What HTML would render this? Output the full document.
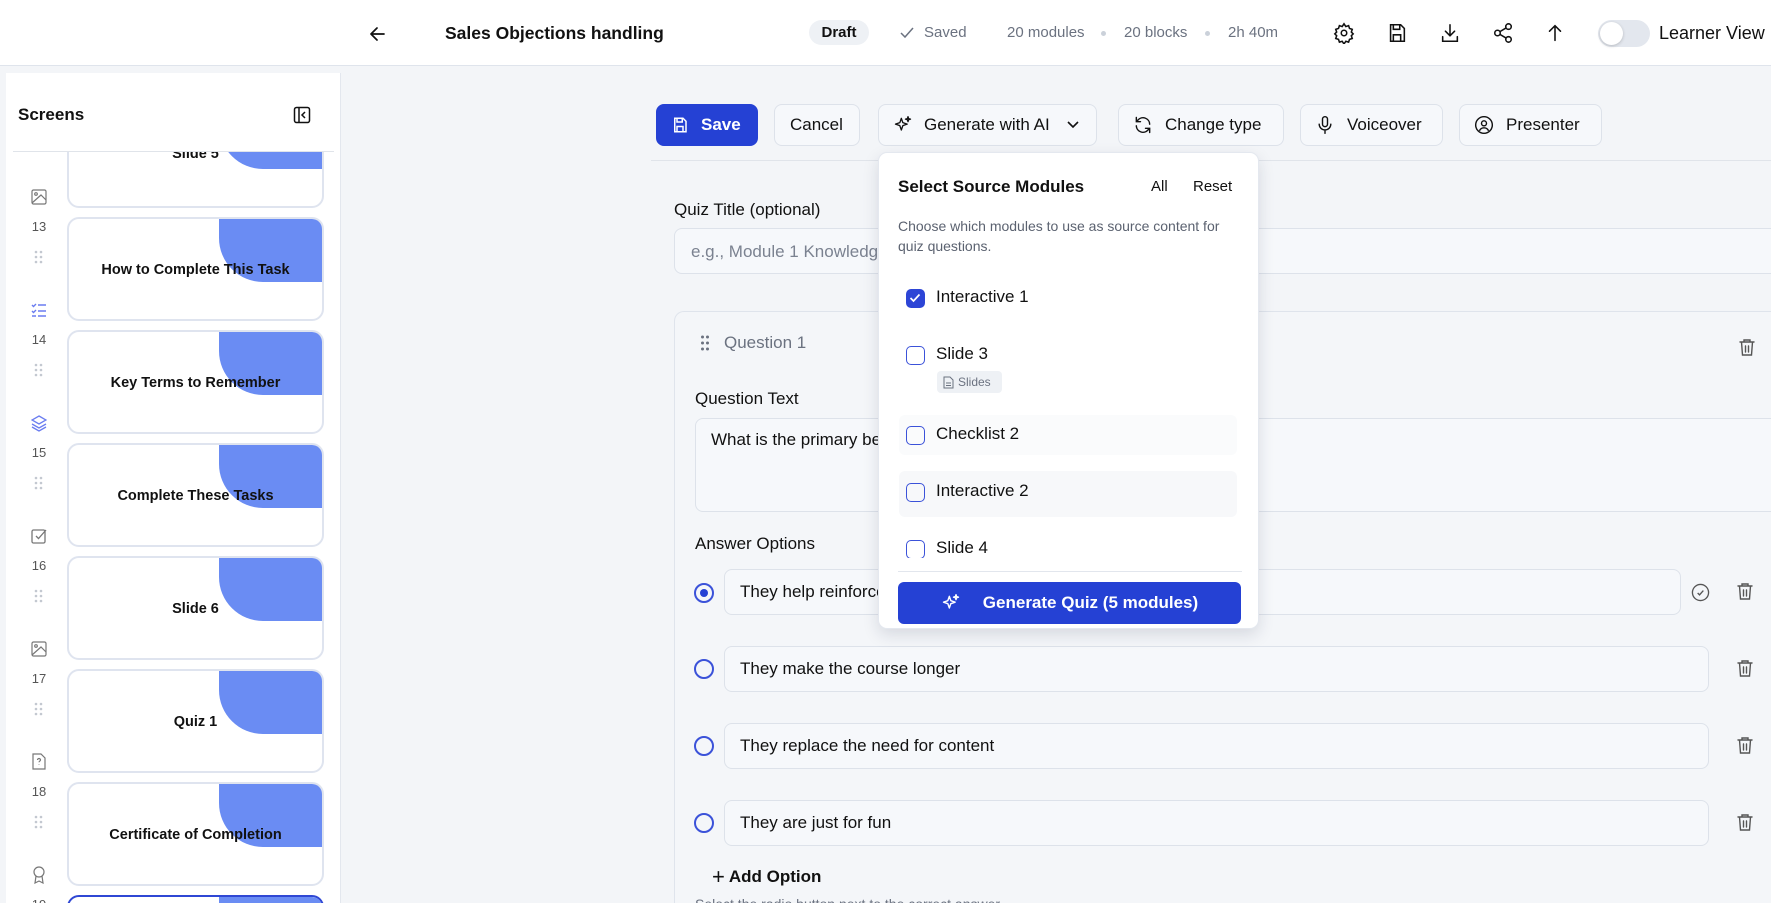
<!DOCTYPE html>
<html><head><meta charset="utf-8"><style>
*{box-sizing:border-box;margin:0;padding:0}
html,body{width:1771px;height:903px;overflow:hidden}
body{background:#f3f5f8;font-family:"Liberation Sans",Arial,sans-serif;color:#111;position:relative}
.a{position:absolute}
svg{display:block}
.hdr{left:0;top:0;width:1771px;height:66px;background:#fff;border-bottom:1px solid #dfe4ec}
.meta{font-size:15px;color:#6b7280;top:24px}
.dot{width:5px;height:5px;border-radius:50%;background:#cbd1da;top:31px}
.side{left:6px;top:73px;width:335px;height:830px;background:#fff;border-right:1px solid #e3e7ee}
.card{left:67px;width:257px;height:104px;background:#fff;border:2px solid #dfe4ef;border-radius:12px;overflow:hidden}
.card .blue{position:absolute;right:0;top:0;width:103px;height:63px;background:#6a8cf3;border-bottom-left-radius:44px}
.card .t{position:absolute;left:0;right:0;top:43px;text-align:center;font-weight:700;font-size:14.5px;color:#111}
.num{left:27px;width:24px;text-align:center;font-size:13px;color:#555}
.btn{top:104px;height:42px;border:1px solid #dde2ea;border-radius:8px;background:#f6f8fb;font-size:17px;color:#111;display:flex;align-items:center;gap:12px;padding-left:14px}
.lbl{font-size:17px;color:#111;font-weight:500}
.inp{background:#f6f8fb;border:1px solid #dde2ea;border-radius:8px}
.opt{left:724px;height:46px;font-size:17px;display:flex;align-items:center;padding-left:15px}
.radio{left:694px;width:20px;height:20px;border:2px solid #3b52d9;border-radius:50%}
.pop{left:878px;top:152px;width:381px;height:477px;background:#fff;border:1px solid #e4e8ef;border-radius:9px;box-shadow:0 6px 16px rgba(20,30,60,.13);overflow:hidden}
.cb{width:19px;height:19px;border:1.6px solid #3b52d9;border-radius:5px}
.it{font-size:17px;color:#111}
</style></head><body>
<div class="a hdr"></div>
<svg class="a" style="left:368px;top:24px" width="20" height="20" viewBox="0 0 20 20"><path d="M16 10H4M9 4L3 10l6 6" fill="none" stroke="#111" stroke-width="1.7" stroke-linecap="round" stroke-linejoin="round"/></svg>
<div class="a" style="left:445px;top:23px;font-size:17.5px;font-weight:700">Sales Objections handling</div>
<div class="a" style="left:809px;top:20px;width:60px;height:25px;border-radius:13px;background:#eef1f5;font-size:15px;font-weight:700;text-align:center;line-height:25px">Draft</div>
<svg class="a" style="left:900px;top:27px" width="14" height="12" viewBox="0 0 14 12"><path d="M1 6l4 4 8-9" fill="none" stroke="#6b7280" stroke-width="1.5"/></svg>
<div class="a meta" style="left:924px">Saved</div>
<div class="a meta" style="left:1007px">20 modules</div>
<div class="a dot" style="left:1101px"></div>
<div class="a meta" style="left:1124px">20 blocks</div>
<div class="a dot" style="left:1205px"></div>
<div class="a meta" style="left:1228px">2h 40m</div>
<svg class="a" style="left:1333px;top:22px" width="22" height="22" viewBox="0 0 24 24" fill="none" stroke="#111" stroke-width="1.7"><circle cx="12" cy="12" r="3"/><path d="M12 2l2 3 3-1 1 3 3 1-1 3 2 2-2 2 1 3-3 1-1 3-3-1-2 3-2-3-3 1-1-3-3-1 1-3-2-2 2-2-1-3 3-1 1-3 3 1z"/></svg>
<svg class="a" style="left:1386px;top:22px" width="22" height="22" viewBox="0 0 24 24" fill="none" stroke="#111" stroke-width="1.7"><path d="M5 3h11l4 4v14H5z"/><path d="M8 3v5h7V3M8 21v-7h8v7"/></svg>
<svg class="a" style="left:1439px;top:22px" width="22" height="22" viewBox="0 0 24 24" fill="none" stroke="#111" stroke-width="1.7" stroke-linecap="round"><path d="M12 3v12M7 10l5 5 5-5M4 16v5h16v-5"/></svg>
<svg class="a" style="left:1492px;top:22px" width="22" height="22" viewBox="0 0 24 24" fill="none" stroke="#111" stroke-width="1.7"><circle cx="18" cy="5" r="3"/><circle cx="6" cy="12" r="3"/><circle cx="18" cy="19" r="3"/><path d="M8.6 10.5l6.8-4M8.6 13.5l6.8 4"/></svg>
<svg class="a" style="left:1544px;top:22px" width="22" height="22" viewBox="0 0 24 24" fill="none" stroke="#111" stroke-width="1.7" stroke-linecap="round"><path d="M12 20V4M6 10l6-6 6 6"/></svg>
<div class="a" style="left:1598px;top:20px;width:52px;height:27px;border-radius:14px;background:#e3e7ee"></div>
<div class="a" style="left:1600px;top:22px;width:23px;height:23px;border-radius:50%;background:#fff;box-shadow:0 1px 3px rgba(0,0,0,.2)"></div>
<div class="a" style="left:1659px;top:23px;font-size:18px;font-weight:500">Learner View</div>

<div class="a side"></div>
<div class="a" style="left:18px;top:105px;font-size:17px;font-weight:600">Screens</div>
<svg class="a" style="left:293px;top:106px" width="18" height="18" viewBox="0 0 18 18" fill="none" stroke="#111" stroke-width="1.5"><rect x="1.5" y="1.5" width="15" height="15" rx="2"/><path d="M6 2v14M12 6l-3 3 3 3"/></svg>
<div class="a" style="left:13px;top:151px;width:321px;height:1px;background:#e0e4ea"></div>
<div class="a" style="left:6px;top:152px;width:334px;height:751px;overflow:hidden">
 <div class="a card" style="left:61px;top:-48px"><div class="blue"></div><div class="t" style="top:40px">Slide 5</div></div>
 <div class="a card" style="left:61px;top:65px"><div class="blue"></div><div class="t">How to Complete This Task</div></div>
 <div class="a card" style="left:61px;top:178px"><div class="blue"></div><div class="t">Key Terms to Remember</div></div>
 <div class="a card" style="left:61px;top:291px"><div class="blue"></div><div class="t">Complete These Tasks</div></div>
 <div class="a card" style="left:61px;top:404px"><div class="blue"></div><div class="t">Slide 6</div></div>
 <div class="a card" style="left:61px;top:517px"><div class="blue"></div><div class="t">Quiz 1</div></div>
 <div class="a card" style="left:61px;top:630px"><div class="blue"></div><div class="t">Certificate of Completion</div></div>
 <div class="a card" style="left:61px;top:743px;border-color:#2f47d4"><div class="blue"></div><div class="t">Slide 7</div></div>
 <div class="a num" style="left:21px;top:67px">13</div>
 <div class="a num" style="left:21px;top:180px">14</div>
 <div class="a num" style="left:21px;top:293px">15</div>
 <div class="a num" style="left:21px;top:406px">16</div>
 <div class="a num" style="left:21px;top:519px">17</div>
 <div class="a num" style="left:21px;top:632px">18</div>
 <div class="a num" style="left:21px;top:745px">19</div>
 <svg class="a" style="left:27px;top:-15px" width="12" height="840" viewBox="0 0 12 840" fill="#c3c8d0">
  <g id="d"><circle cx="3" cy="2" r="1.3"/><circle cx="8" cy="2" r="1.3"/><circle cx="3" cy="7" r="1.3"/><circle cx="8" cy="7" r="1.3"/><circle cx="3" cy="12" r="1.3"/><circle cx="8" cy="12" r="1.3"/></g>
  <use href="#d" y="113"/><use href="#d" y="226"/><use href="#d" y="339"/><use href="#d" y="452"/><use href="#d" y="565"/><use href="#d" y="678"/>
 </svg>
 <svg class="a" style="left:25px;top:37px" width="16" height="16" viewBox="0 0 16 16" fill="none" stroke="#777" stroke-width="1.2"><rect x="1" y="1" width="14" height="14" rx="1.5"/><circle cx="5" cy="5" r="1.3"/><path d="M1 14l9-8 5 5"/></svg>
 <svg class="a" style="left:25px;top:150px" width="16" height="16" viewBox="0 0 16 16" fill="none" stroke="#6a7cf0" stroke-width="1.4"><path d="M1 3l1.5 1.5L5 2M1 9l1.5 1.5L5 8M7 3h8M7 9h8M7 14h8M1 14h4"/></svg>
 <svg class="a" style="left:25px;top:263px" width="16" height="17" viewBox="0 0 16 17" fill="none" stroke="#6a7cf0" stroke-width="1.3"><path d="M8 1l7 4-7 4-7-4zM1 9l7 4 7-4M1 12l7 4 7-4"/></svg>
 <svg class="a" style="left:25px;top:376px" width="16" height="16" viewBox="0 0 16 16" fill="none" stroke="#777" stroke-width="1.3"><rect x="1" y="2" width="13" height="13" rx="1.5"/><path d="M5 8l2.5 2.5L15 2"/></svg>
 <svg class="a" style="left:25px;top:489px" width="16" height="16" viewBox="0 0 16 16" fill="none" stroke="#777" stroke-width="1.2"><rect x="1" y="1" width="14" height="14" rx="1.5"/><circle cx="5" cy="5" r="1.3"/><path d="M1 14l9-8 5 5"/></svg>
 <svg class="a" style="left:26px;top:601px" width="14" height="17" viewBox="0 0 14 17" fill="none" stroke="#777" stroke-width="1.2"><path d="M1 1h8l4 4v11H1z"/><path d="M5.5 7a1.5 1.5 0 113 0c0 1-1.5 1.2-1.5 2.3M7 11.5v.5"/></svg>
 <svg class="a" style="left:26px;top:714px" width="14" height="18" viewBox="0 0 14 18" fill="none" stroke="#777" stroke-width="1.2"><circle cx="7" cy="6" r="5"/><path d="M4 10l-1 7 4-2 4 2-1-7"/></svg>
</div>

<div class="a" style="left:651px;top:160px;width:1120px;height:1px;background:#e0e4ea"></div>
<div class="a btn" style="left:656px;width:102px;background:#2541d4;border-color:#2541d4;color:#fff;font-weight:600">
 <svg width="18" height="18" viewBox="0 0 24 24" fill="none" stroke="#fff" stroke-width="2"><path d="M5 3h11l4 4v14H5z"/><path d="M8 3v5h7V3M8 21v-7h8v7"/></svg>Save</div>
<div class="a btn" style="left:774px;width:86px;padding-left:15px">Cancel</div>
<div class="a btn" style="left:878px;width:219px;gap:11px">
 <svg width="20" height="20" viewBox="0 0 24 24" fill="none" stroke="#111" stroke-width="1.6" stroke-linejoin="round"><path d="M10 4l1.8 5.2L17 11l-5.2 1.8L10 18l-1.8-5.2L3 11l5.2-1.8zM18 2l.7 2.3L21 5l-2.3.7L18 8l-.7-2.3L15 5l2.3-.7z"/></svg>Generate with AI<svg style="margin-left:6px" width="12" height="8" viewBox="0 0 12 8"><path d="M1 1l5 5 5-5" fill="none" stroke="#111" stroke-width="1.6"/></svg></div>
<div class="a btn" style="left:1118px;width:166px">
 <svg width="20" height="20" viewBox="0 0 24 24" fill="none" stroke="#111" stroke-width="1.7" stroke-linecap="round"><path d="M20 11a8 8 0 00-14-5L4 8M4 3v5h5M4 13a8 8 0 0014 5l2-2M20 21v-5h-5"/></svg>Change type</div>
<div class="a btn" style="left:1300px;width:143px">
 <svg width="20" height="20" viewBox="0 0 24 24" fill="none" stroke="#111" stroke-width="1.7" stroke-linecap="round"><rect x="9" y="2" width="6" height="12" rx="3"/><path d="M5 11a7 7 0 0014 0M12 18v4"/></svg>Voiceover</div>
<div class="a btn" style="left:1459px;width:143px">
 <svg width="20" height="20" viewBox="0 0 24 24" fill="none" stroke="#111" stroke-width="1.7"><circle cx="12" cy="12" r="10"/><circle cx="12" cy="10" r="3"/><path d="M6.5 19a6 6 0 0111 0"/></svg>Presenter</div>

<div class="a lbl" style="left:674px;top:200px">Quiz Title (optional)</div>
<div class="a inp" style="left:674px;top:228px;width:1110px;height:46px"></div>
<div class="a" style="left:691px;top:242px;font-size:17px;color:#7b8290">e.g., Module 1 Knowledge Check</div>

<div class="a" style="left:674px;top:311px;width:1110px;height:592px;background:#f4f6f9;border:1px solid #dfe4ec;border-bottom:none;border-radius:10px 10px 0 0"></div>
<svg class="a" style="left:700px;top:335px" width="10" height="16" viewBox="0 0 10 16" fill="#6b7280"><circle cx="2.5" cy="2" r="1.5"/><circle cx="7.5" cy="2" r="1.5"/><circle cx="2.5" cy="8" r="1.5"/><circle cx="7.5" cy="8" r="1.5"/><circle cx="2.5" cy="14" r="1.5"/><circle cx="7.5" cy="14" r="1.5"/></svg>
<div class="a" style="left:724px;top:333px;font-size:17px;color:#6b7280">Question 1</div>
<div class="a lbl" style="left:695px;top:389px">Question Text</div>
<div class="a inp" style="left:695px;top:418px;width:1090px;height:94px"></div>
<div class="a" style="left:711px;top:430px;font-size:17px">What is the primary benefit of using quizzes in sales training?</div>
<div class="a lbl" style="left:695px;top:534px">Answer Options</div>
<div class="a radio" style="top:583px"></div><div class="a" style="left:700px;top:589px;width:8px;height:8px;border-radius:50%;background:#2541d4"></div>
<div class="a inp opt" style="top:569px;width:957px">They help reinforce learning and check understanding</div>
<div class="a radio" style="top:659px"></div>
<div class="a inp opt" style="top:646px;width:985px">They make the course longer</div>
<div class="a radio" style="top:736px"></div>
<div class="a inp opt" style="top:723px;width:985px">They replace the need for content</div>
<div class="a radio" style="top:813px"></div>
<div class="a inp opt" style="top:800px;width:985px">They are just for fun</div>
<div class="a" style="left:712px;top:864px;font-size:17px;font-weight:600"><span style="font-weight:300;font-size:22px;vertical-align:-2px;margin-right:4px">+</span>Add Option</div>
<div class="a" style="left:695px;top:896px;font-size:14px;color:#6b7280;height:7px;overflow:hidden;line-height:16px">Select the radio button next to the correct answer</div>
<svg class="a" style="left:1691px;top:583px" width="19" height="19" viewBox="0 0 20 20" fill="none" stroke="#555" stroke-width="1.4"><circle cx="10" cy="10" r="8.5"/><path d="M7 10.5l2 2 4-4.5"/></svg>
<svg class="a" style="left:0;top:0;overflow:visible" width="1" height="1"><defs><g id="tr" fill="none" stroke="#555" stroke-width="1.4" stroke-linecap="round"><path d="M2 4h14M6 4V2h6v2M3.5 4l1 13h9l1-13M7.5 8v6M10.5 8v6"/></g></defs>
 <use href="#tr" x="1738" y="338"/><use href="#tr" x="1736" y="582"/><use href="#tr" x="1736" y="659"/><use href="#tr" x="1736" y="736"/><use href="#tr" x="1736" y="813"/></svg>

<div class="a pop">
 <div class="a" style="left:19px;top:24px;font-size:17px;font-weight:600">Select Source Modules</div>
 <div class="a" style="left:272px;top:25px;font-size:15px;font-weight:500">All</div>
 <div class="a" style="left:314px;top:25px;font-size:15px;font-weight:500">Reset</div>
 <div class="a" style="left:19px;top:63px;width:325px;font-size:14px;line-height:20px;color:#5b6270">Choose which modules to use as source content for quiz questions.</div>
 <div class="a cb" style="left:27px;top:136px;background:#2d45d6;border-color:#2d45d6"><svg width="16" height="16" viewBox="0 0 16 16"><path d="M3.5 8l3 3 6-6.5" fill="none" stroke="#fff" stroke-width="1.7"/></svg></div>
 <div class="a it" style="left:57px;top:134px">Interactive 1</div>
 <div class="a cb" style="left:27px;top:193px"></div>
 <div class="a it" style="left:57px;top:191px">Slide 3</div>
 <div class="a" style="left:58px;top:218px;width:65px;height:22px;background:#eef1f5;border-radius:4px;font-size:12px;color:#6b7280;line-height:22px;padding-left:21px">Slides</div>
 <svg class="a" style="left:64px;top:223px" width="11" height="13" viewBox="0 0 11 13" fill="none" stroke="#6b7280" stroke-width="1"><path d="M1 1h6l3 3v8H1zM3 7h5M3 9.5h5"/></svg>
 <div class="a" style="left:20px;top:262px;width:338px;height:40px;background:#fafbfc;border-radius:6px"></div>
 <div class="a cb" style="left:27px;top:273px"></div>
 <div class="a it" style="left:57px;top:271px">Checklist 2</div>
 <div class="a" style="left:20px;top:318px;width:338px;height:46px;background:#f7f8fa;border-radius:6px"></div>
 <div class="a cb" style="left:27px;top:330px"></div>
 <div class="a it" style="left:57px;top:328px">Interactive 2</div>
 <div class="a" style="left:0;top:380px;width:381px;height:25px;overflow:hidden">
  <div class="a cb" style="left:27px;top:7px"></div>
  <div class="a it" style="left:57px;top:5px">Slide 4</div>
 </div>
 <div class="a" style="left:19px;top:418px;width:344px;height:1px;background:#e2e6ed"></div>
 <div class="a" style="left:19px;top:429px;width:343px;height:42px;background:#2541d4;border-radius:6px;color:#fff;font-size:17px;font-weight:600;display:flex;align-items:center;justify-content:center;gap:22px">
  <svg width="20" height="20" viewBox="0 0 24 24" fill="none" stroke="#fff" stroke-width="1.7" stroke-linejoin="round"><path d="M10 4l1.8 5.2L17 11l-5.2 1.8L10 18l-1.8-5.2L3 11l5.2-1.8zM18 2l.7 2.3L21 5l-2.3.7L18 8l-.7-2.3L15 5l2.3-.7z"/></svg>Generate Quiz (5 modules)</div>
</div>
</body></html>
